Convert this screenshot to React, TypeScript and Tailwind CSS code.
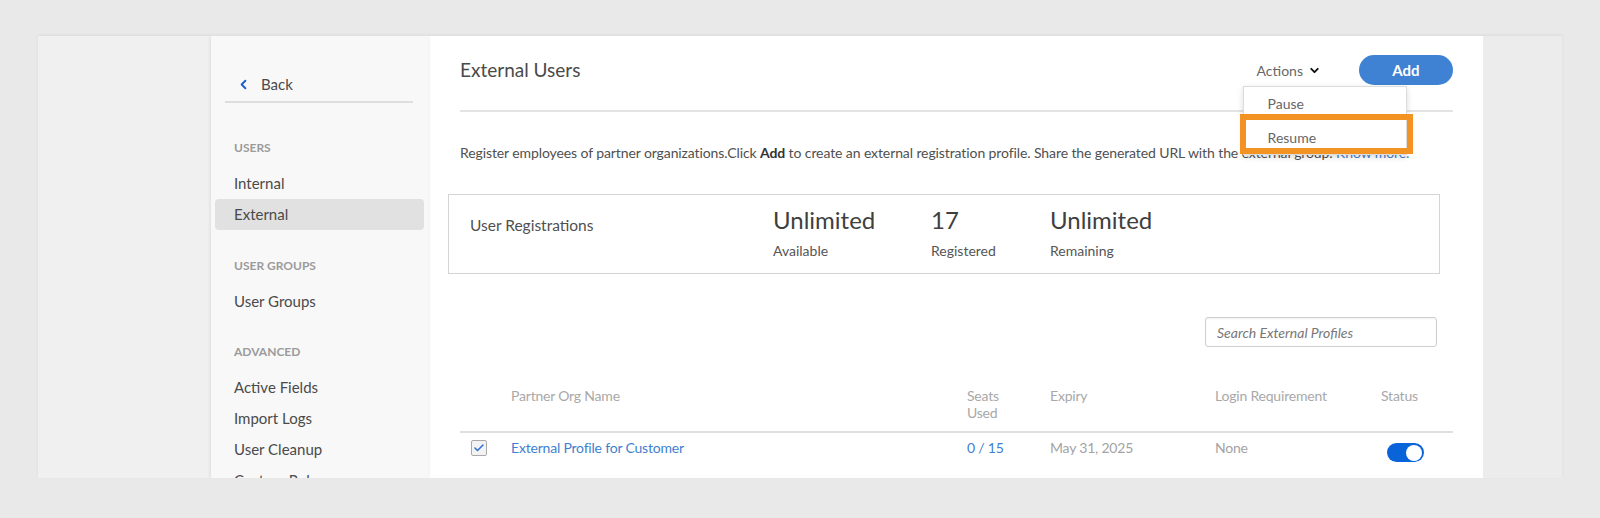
import React from 'react';
import { ChevronLeft, ChevronDown, Check } from 'lucide-react';

const SideHeader: React.FC<{ label: string }> = ({ label }) => (
  <div className="pl-[23px] h-[20px] leading-[20px] mb-[10px] text-[12px] font-bold text-[#9b9b9b] uppercase">
    {label}
  </div>
);

const SideItem: React.FC<{ label: string; active?: boolean }> = ({ label, active }) => (
  <div
    className={`mx-[4px] h-[31px] flex items-center pl-[19px] rounded-[4px] text-[15px] text-[#4a4a4a] ${
      active ? 'bg-[#e1e1e1]' : ''
    }`}
  >
    {label}
  </div>
);

const Sidebar: React.FC = () => (
  <aside className="w-[217px] shrink-0 bg-[#f8f8f8] shadow-[0_0_4px_rgba(0,0,0,0.12)] z-10 pt-[34px]">
    {/* Back */}
    <div className="ml-[14px] mr-[15px] h-[33px] flex items-center border-b-2 border-[#dedede] pb-[2px]">
      <ChevronLeft className="ml-[11px] w-[15px] h-[15px] text-[#1b5fd0]" strokeWidth={3} />
      <span className="ml-[10px] text-[15px] text-[#4a4a4a]">Back</span>
    </div>

    <div className="mt-[35px]">
      <SideHeader label="Users" />
      <SideItem label="Internal" />
      <SideItem label="External" active />
    </div>

    <div className="mt-[26px]">
      <SideHeader label="User Groups" />
      <SideItem label="User Groups" />
    </div>

    <div className="mt-[25px]">
      <SideHeader label="Advanced" />
      <SideItem label="Active Fields" />
      <SideItem label="Import Logs" />
      <SideItem label="User Cleanup" />
      <SideItem label="Custom Roles" />
    </div>
  </aside>
);

const ActionsMenu: React.FC = () => (
  <div className="relative h-[30px] flex items-center text-[14px] text-[#686868]">
    <span>Actions</span>
    <ChevronDown className="ml-[5px] w-[13px] h-[13px] text-[#111]" strokeWidth={3.5} />

    {/* open dropdown */}
    <div className="absolute left-[-14px] top-[31px] w-[164px] bg-white border border-[#dcdcdc] shadow-[0_2px_6px_rgba(0,0,0,0.15)] z-20">
      <div className="h-[33px] flex items-center pl-[24px] text-[14px] text-[#666]">Pause</div>
      <div className="h-[34px] flex items-center pl-[24px] text-[14px] text-[#666]">Resume</div>
      <div className="absolute left-[-4px] top-[27px] w-[173px] h-[40px] border-[6px] border-[#f39323]" />
    </div>
  </div>
);

const Stat: React.FC<{ value: string; label: string; width: string }> = ({ value, label, width }) => (
  <div className={`${width} pt-[10px]`}>
    <div className="text-[24px] leading-[30px] text-[#3f3f3f]">{value}</div>
    <div className="mt-[6px] text-[14px] leading-[20px] text-[#555]">{label}</div>
  </div>
);

export default function App() {
  return (
    <div className="h-[518px] bg-[#e9e9e9] pt-[36px] px-[38px] font-['Lato',sans-serif] overflow-hidden">
      <div className="h-[442px] flex overflow-hidden shadow-[0_-1px_3px_rgba(0,0,0,0.06)]">
        <div className="w-[173px] shrink-0 bg-[#f0f0f0]" />

        <Sidebar />

        <main className="flex-1 bg-white pl-[32px] pr-[30px] pt-[19px]">
          {/* Header */}
          <div className="flex items-center h-[30px]">
            <h1 className="text-[19px] text-[#4a4a4a]">External Users</h1>
            <div className="ml-auto">
              <ActionsMenu />
            </div>
            <button className="ml-[38px] w-[94px] h-[30px] rounded-full bg-[#3f82d4] text-white text-[15px] font-bold">
              Add
            </button>
          </div>
          <div className="mt-[25px] h-[2px] bg-[#e3e3e3]" />

          <p className="mt-[31px] text-[14px] leading-[20px] tracking-[-0.1px] text-[#505050] whitespace-nowrap">
            Register employees of partner organizations.Click <span className="font-bold text-[#333]">Add</span> to
            create an external registration profile. Share the generated URL with the external group.{' '}
            <span className="text-[#3f7fd0]">Know more.</span>
          </p>

          {/* Registrations */}
          <div className="mt-[31px] -ml-[12px] mr-[13px] h-[80px] border border-[#d4d4d4] flex items-start">
            <div className="w-[324px] pl-[21px] pt-[20px] text-[15.5px] leading-[20px] text-[#4f4f4f]">
              User Registrations
            </div>
            <Stat value="Unlimited" label="Available" width="w-[158px]" />
            <Stat value="17" label="Registered" width="w-[119px]" />
            <Stat value="Unlimited" label="Remaining" width="w-[150px]" />
          </div>

          {/* Search */}
          <div className="mt-[43px] mr-[16px] flex justify-end">
            <input
              type="text"
              placeholder="Search External Profiles"
              className="w-[232px] h-[30px] border border-[#cfcfcf] rounded-[3px] pl-[11px] text-[14px] italic placeholder:text-[#777] shadow-[inset_0_1px_2px_rgba(0,0,0,0.06)] focus:outline-none"
            />
          </div>

          {/* Table */}
          <div className="mt-[40px] text-[14px] tracking-[-0.2px]">
            <div className="flex items-start pb-[10px] leading-[17px] text-[#a8a8a8] border-b-2 border-[#e0e0e0]">
              <div className="w-[51px]" />
              <div className="w-[456px]">Partner Org Name</div>
              <div className="w-[83px]">
                Seats
                <br />
                Used
              </div>
              <div className="w-[165px]">Expiry</div>
              <div className="w-[166px]">Login Requirement</div>
              <div className="flex-1">Status</div>
            </div>
            <div className="flex items-center h-[30px] leading-[20px]">
              <div className="w-[51px] pl-[11px]">
                <div className="w-[16px] h-[16px] rounded-[2px] border border-[#a9a9a9] bg-[#f3f3f3] flex items-center justify-center">
                  <Check className="w-[12px] h-[12px] text-[#2a6ed3]" strokeWidth={3} />
                </div>
              </div>
              <div className="w-[456px] text-[#3f7fd0]">External Profile for Customer</div>
              <div className="w-[83px] text-[#3f7fd0]">0 / 15</div>
              <div className="w-[165px] text-[#a3a3a3]">May 31, 2025</div>
              <div className="w-[166px] text-[#a3a3a3]">None</div>
              <div className="flex-1 pl-[6px] pt-[9px]">
                <div className="w-[37px] h-[19px] rounded-full bg-[#0a64d9] flex items-center justify-end pr-[2px]">
                  <div className="w-[16px] h-[16px] rounded-full bg-white" />
                </div>
              </div>
            </div>
          </div>
        </main>

        <div className="w-[79px] shrink-0 bg-[#ececec]" />
      </div>
    </div>
  );
}
